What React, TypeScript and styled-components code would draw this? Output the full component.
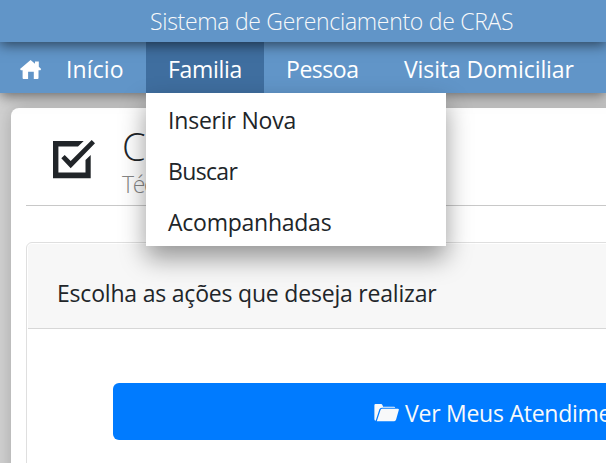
import React from "react";
import styled, { createGlobalStyle } from "styled-components";

const GlobalStyle = createGlobalStyle`
  *, *::before, *::after { box-sizing: border-box; }
  body {
    margin: 0;
    overflow: hidden;
    background: #d3d3d3;
    color: #212529;
    font-family: "Segoe UI", "Open Sans", "Noto Sans", sans-serif;
    font-size: 23px;
  }
`;

const Page = styled.div`
  display: flex;
  flex-direction: column;
  width: 606px;
  height: 463px;
  overflow: hidden;
`;

const TopBar = styled.header`
  position: relative;
  z-index: 3;
  flex: none;
  height: 42px;
  padding-left: 150px;
  background: #6195c8;
  box-shadow: 0 3px 12px rgba(0, 0, 0, 0.55);
  color: #f8f9fa;
  font-weight: 300;
  line-height: 43px;
  letter-spacing: -0.29px;
  white-space: nowrap;
`;

const NavBar = styled.nav`
  position: relative;
  z-index: 2;
  flex: none;
  display: flex;
  height: 51px;
  background: #6195c8;
  box-shadow: 0 3px 12px rgba(0, 0, 0, 0.5);
  color: #fff;
`;

const HomeLink = styled.a`
  width: 44px;
  padding: 18px 0 0 20px;
  line-height: 0;
`;

const NavItem = styled.div<{ $width: number; $track: number; $active?: boolean }>`
  position: relative;
  flex: none;
  width: ${(p) => p.$width}px;
  padding-left: 22px;
  background: ${(p) => (p.$active ? "#3f6e9f" : "transparent")};
  line-height: 55px;
  letter-spacing: ${(p) => p.$track}px;
  white-space: nowrap;
`;

const Menu = styled.div`
  position: absolute;
  top: 51px;
  left: 0;
  width: 300px;
  background: #fff;
  box-shadow: 0 12px 24px rgba(0, 0, 0, 0.4);
  color: #212529;
`;

const MenuItem = styled.div<{ $track: number }>`
  height: 51px;
  padding-left: 22px;
  line-height: 55px;
  letter-spacing: ${(p) => p.$track}px;
`;

const Main = styled.main`
  flex: none;
  width: 900px;
  height: 500px;
  margin: 15px 0 0 11px;
  padding: 0 15px;
  background: #fff;
  border-radius: 8px;
  box-shadow: 0 0 20px rgba(0, 0, 0, 0.22);
`;

const Heading = styled.section`
  display: flex;
  height: 98px;
  padding: 32px 0 0 26px;
  border-bottom: 1px solid #c8c8c8;
`;

const HeadingText = styled.div`
  margin-left: 26px;
  font-weight: 300;
`;

const Title = styled.h1`
  margin: -16px 0 0;
  font-size: 38px;
  font-weight: 300;
  line-height: 44px;
`;

const Subtitle = styled.p`
  margin: 2px 0 0;
  color: #868686;
  line-height: 28px;
  letter-spacing: -1.3px;
`;

const Card = styled.section`
  height: 300px;
  margin-top: 36px;
  padding: 1px;
  border: 1px solid #dfdfdf;
  border-radius: 6px;
`;

const CardHeader = styled.div`
  height: 85px;
  padding-left: 29px;
  background: #f7f7f7;
  border-bottom: 1px solid #d7d7d7;
  border-radius: 4px 4px 0 0;
  line-height: 99px;
  letter-spacing: -0.2px;
`;

const ActionButton = styled.button`
  display: flex;
  align-items: center;
  gap: 6px;
  width: 780px;
  height: 57px;
  margin: 54px 0 0 85px;
  padding: 2px 0 0 261px;
  border: 0;
  border-radius: 6px;
  background: #007bff;
  color: #f8f9fa;
  font: inherit;
  letter-spacing: -0.25px;
  white-space: nowrap;
`;

const HomeIcon = () => (
  <svg width="22" height="19" viewBox="0 0 22 19" fill="currentColor">
    <path d="M10.6 0 15 3.8V1.6h3.8v5.2l2.4 2.2-.8 1.2h-1.9v7.9q0 .9-.9.9h-3.8v-7.3H8.1V19H3.5q-.9 0-.9-.9v-7.9H.9L0 9Z" />
  </svg>
);

const CheckIcon = () => (
  <svg width="44" height="40" viewBox="0 0 44 40" fill="currentColor">
    <path d="M1 1H31.7L26 6.5H6.4V32.5H33.5V20L38.7 15V38.2H1Z" />
    <path d="M9.3 18.3 18.7 28.3 43 3.3 39.7 0 18.7 21 12.7 15Z" />
  </svg>
);

const FolderIcon = () => (
  <svg width="25" height="18" viewBox="0 0 25 18" fill="currentColor">
    <path d="M1.5 0H7Q8 0 8.4 1L9.1 2.7H20Q21.2 2.7 21.2 3.7H7.8Q6 3.7 5.4 5.3L1.7 16.8Q.4 16.6.4 15.2V1.2Q.4 0 1.5 0Z" />
    <path d="M8.2 4.7H23.8Q25.2 4.7 24.8 6L22.1 15.6Q21.6 17.2 20.2 17.2H2.8L6.5 5.9Q7 4.7 8.2 4.7Z" />
  </svg>
);

export default function App() {
  return (
    <>
      <GlobalStyle />
      <Page>
        <TopBar>Sistema de Gerenciamento de CRAS</TopBar>
        <NavBar>
          <HomeLink><HomeIcon /></HomeLink>
          <NavItem $width={102} $track={0.1}>Início</NavItem>
          <NavItem $width={118} $track={-0.3} $active>
            Familia
            <Menu>
              <MenuItem $track={-0.2}>Inserir Nova</MenuItem>
              <MenuItem $track={-0.65}>Buscar</MenuItem>
              <MenuItem $track={-0.25}>Acompanhadas</MenuItem>
            </Menu>
          </NavItem>
          <NavItem $width={118} $track={-0.45}>Pessoa</NavItem>
          <NavItem $width={204} $track={-0.1}>Visita Domiciliar</NavItem>
        </NavBar>
        <Main>
          <Heading>
            <CheckIcon />
            <HeadingText>
              <Title>C</Title>
              <Subtitle>Téc</Subtitle>
            </HeadingText>
          </Heading>
          <Card>
            <CardHeader>Escolha as ações que deseja realizar</CardHeader>
            <ActionButton>
              <FolderIcon />
              <span>Ver Meus Atendimentos</span>
            </ActionButton>
          </Card>
        </Main>
      </Page>
    </>
  );
}
